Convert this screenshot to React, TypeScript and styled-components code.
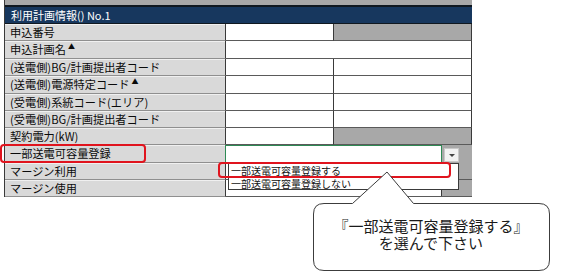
import React from "react"
import styled, { createGlobalStyle } from "styled-components"

const GlobalStyle = createGlobalStyle`
	body {
		margin: 0;
		background: #ffffff;
		font-family: "Noto Sans CJK JP", "Liberation Sans", sans-serif;
	}
`

const Canvas = styled.div`
	position: relative;
	width: 565px;
	height: 274px;
	overflow: hidden;
	background: #ffffff;
`

const Sheet = styled.div`
	margin-left: 4px;
	width: 467px;
	border-left: 1px solid #3a3a3a;
`

const TopStrip = styled.div`
	height: 5px;
	background: #a8a8a8;
`

const Header = styled.div`
	box-sizing: border-box;
	height: 19px;
	background: #17375e;
	border-top: 2px solid #101820;
	border-bottom: 1px solid #101820;
	color: #ffffff;
	font-size: 11px;
	line-height: 16px;
	padding-left: 6px;
	white-space: nowrap;
`

const Grid = styled.div`
	display: grid;
	grid-template-columns: 221px 108px 138px;
	grid-template-rows: 17px 18px 17px 18px 17px 17px 17px 18px 17px 17px;
`

const Label = styled.div`
	box-sizing: border-box;
	background: #d9d9d9;
	border-bottom: 1px solid #8f8f8f;
	border-right: 1px solid #3a3a3a;
	box-shadow: inset 0 1px 0 #f0f0f0;
	padding-left: 5px;
	font-size: 11.2px;
	line-height: 16px;
	color: #0a0a0a;
	white-space: nowrap;
`

const Mark = styled.span`
	font-size: 7px;
	line-height: 0;
	vertical-align: 5px;
	margin-left: 2px;
`

const Cell = styled.div<{ $tone?: "white" | "gray"; $span?: number }>`
	box-sizing: border-box;
	grid-column: span ${(p) => p.$span ?? 1};
	background: ${(p) => (p.$tone === "gray" ? "#a8a8a8" : "#ffffff")};
	border-bottom: 1px solid #5a5a5a;
	border-right: 1px solid #3a3a3a;
`

const SplitCell = styled.div`
	grid-column: span 2;
	display: grid;
	grid-template-columns: 216px 30px;
	border-bottom: 1px solid #5a5a5a;
	box-sizing: border-box;
`

const SplitWhite = styled.div<{ $active?: boolean }>`
	box-sizing: border-box;
	background: #ffffff;
	border-right: 1px solid #3a3a3a;
	${(p) =>
		p.$active &&
		`
		border: 1px solid #2f8a55;
		margin-left: -1px;
		width: 217px;
		height: 18px;
	`}
`

const SplitGray = styled.div`
	background: #a8a8a8;
`

const ArrowButton = styled.div`
	position: absolute;
	left: 444px;
	top: 148px;
	width: 13px;
	height: 12px;
	background: #f2f2f2;
	border: 1px solid #c8c8c8;
	display: flex;
	align-items: center;
	justify-content: center;
`

const Caret = styled.div`
	width: 0;
	height: 0;
	border-left: 3px solid transparent;
	border-right: 3px solid transparent;
	border-top: 3px solid #444444;
`

const DropList = styled.div`
	position: absolute;
	left: 228px;
	top: 163px;
	width: 227px;
	height: 25px;
	background: #ffffff;
	border: 1px solid #3a3a3a;
	font-size: 10px;
	line-height: 13px;
	color: #111111;
	padding-left: 2px;
`

const Option = styled.div`
	height: 12.5px;
	white-space: nowrap;
`

const RedFrame = styled.div`
	position: absolute;
	box-sizing: border-box;
	border: 2px solid #e0141e;
	border-radius: 4px;
`

const Callout = styled.div`
	position: absolute;
	left: 300px;
	top: 160px;
	width: 260px;
	height: 114px;
`

const CalloutText = styled.div`
	position: absolute;
	left: 13px;
	top: 43px;
	width: 236px;
	height: 67px;
	display: flex;
	flex-direction: column;
	align-items: center;
	justify-content: center;
	padding-bottom: 6px;
	box-sizing: border-box;
	font-size: 15px;
	line-height: 17px;
	color: #1a1a1a;
	white-space: nowrap;
`

const rows: { label: React.ReactNode; cells: React.ReactNode }[] = [
	{ label: "申込番号", cells: <><Cell /><Cell $tone="gray" /></> },
	{ label: <>申込計画名<Mark>▲</Mark></>, cells: <Cell $span={2} /> },
	{ label: "(送電側)BG/計画提出者コード", cells: <><Cell /><Cell /></> },
	{ label: <>(送電側)電源特定コード<Mark>▲</Mark></>, cells: <><Cell /><Cell /></> },
	{ label: "(受電側)系統コード(エリア)", cells: <><Cell /><Cell /></> },
	{ label: "(受電側)BG/計画提出者コード", cells: <><Cell /><Cell /></> },
	{ label: "契約電力(kW)", cells: <><Cell /><Cell $tone="gray" /></> },
	{ label: "一部送電可容量登録", cells: <SplitCell><SplitWhite $active /><SplitGray /></SplitCell> },
	{ label: "マージン利用", cells: <SplitCell><SplitWhite /><SplitGray /></SplitCell> },
	{ label: "マージン使用", cells: <SplitCell><SplitWhite /><SplitGray /></SplitCell> },
]

const App = () => (
	<Canvas>
		<GlobalStyle />
		<Sheet>
			<TopStrip />
			<Header>利用計画情報() No.1</Header>
			<Grid>
				{rows.map((r, i) => (
					<React.Fragment key={i}>
						<Label>{r.label}</Label>
						{r.cells}
					</React.Fragment>
				))}
			</Grid>
		</Sheet>

		<ArrowButton>
			<Caret />
		</ArrowButton>

		<DropList>
			<Option>一部送電可容量登録する</Option>
			<Option>一部送電可容量登録しない</Option>
		</DropList>

		<RedFrame style={{ left: 0, top: 144, width: 146, height: 19 }} />
		<RedFrame style={{ left: 218, top: 162, width: 233, height: 16 }} />

		<Callout>
			<svg width="260" height="114" viewBox="0 0 260 114">
				<path
					d="M 24 43.5 L 52.5 43.5 L 87 12 L 113.5 43.5 L 239 43.5 Q 249.5 43.5 249.5 54 L 249.5 100 Q 249.5 110.5 239 110.5 L 24 110.5 Q 13.5 110.5 13.5 100 L 13.5 54 Q 13.5 43.5 24 43.5 Z"
					fill="#ffffff"
					stroke="#3c3c3c"
					strokeWidth="1"
				/>
			</svg>
			<CalloutText>
				<div>『一部送電可容量登録する』</div>
				<div>を選んで下さい</div>
			</CalloutText>
		</Callout>
	</Canvas>
)

export default App
